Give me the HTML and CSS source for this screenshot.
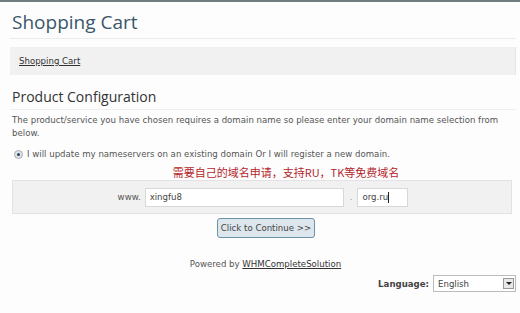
FILE: index.html
```html
<html>
<head>
<link rel="stylesheet" href="styles.css">
</head>
<body>
<div class="wrapper">
  <h1 class="page-title">Shopping Cart</h1>

  <div class="breadcrumb">
    <a href="#">Shopping Cart</a>
  </div>

  <h2 class="section-title">Product Configuration</h2>

  <p class="intro">
    The product/service you have chosen requires a domain name so please enter your domain name selection from below.
  </p>

  <div class="option">
    <span class="radio"><span class="dot"></span></span>
    I will update my nameservers on an existing domain Or I will register a new domain.
  </div>

  <div class="note">需要自己的域名申请，支持RU，TK等免费域名</div>

  <div class="domain-box">
    <span class="www">www.</span>
    <span class="input sld">xingfu8</span>
    <span class="dot-sep">.</span>
    <span class="input tld">org.ru<span class="caret"></span></span>
  </div>

  <div class="actions">
    <span class="btn">Click to Continue &gt;&gt;</span>
  </div>

  <div class="powered">
    Powered by <a href="#">WHMCompleteSolution</a>
  </div>

  <div class="language">
    <span class="lang-label">Language:</span>
    <span class="select">English<span class="arrow"></span></span>
  </div>
</div>
</body>
</html>
```

FILE: styles.css
```css
body {
  margin: 0;
  background: #fdfdfd;
  border-top: 2px solid #6f7d80;
  font-family: "DejaVu Sans", Verdana, sans-serif;
  font-size: 8.6px;
  color: #555;
}
.wrapper {
  padding: 0 4px 0 10px;
}
.page-title {
  margin: 0;
  padding: 8px 0 4px 2px;
  font-family: "Open Sans", sans-serif;
  font-weight: normal;
  font-size: 19px;
  color: #3b566a;
  border-bottom: 1px solid #ececec;
  line-height: 24px;
}
.breadcrumb {
  margin-top: 8px;
  background: #f1f1f1;
  height: 28px;
  line-height: 28px;
  padding-left: 9px;
  border-right: 1px solid #e4e4e4;
}
.breadcrumb a {
  color: #333;
}
.section-title {
  margin: 13px 0 0 0;
  padding: 0 0 3px 2px;
  font-family: "Open Sans", sans-serif;
  font-weight: normal;
  font-size: 14px;
  color: #333;
  line-height: 18px;
  border-bottom: 1px solid #efefef;
}
.intro {
  margin: 4px 0 0 2px;
  line-height: 13px;
  color: #555;
}
.option {
  margin: 9px 0 0 2px;
  display: flex;
  align-items: center;
  gap: 4px;
  padding-left: 2px;
  line-height: 11px;
}
.radio {
  width: 7px;
  height: 7px;
  border-radius: 50%;
  border: 1px solid #aab;
  background: #dfe6ea;
  display: flex;
  align-items: center;
  justify-content: center;
}
.radio .dot {
  width: 3px;
  height: 3px;
  border-radius: 50%;
  background: #2b4150;
}
.note {
  margin-top: 5px;
  text-align: center;
  padding-left: 46px;
  font-family: "Noto Sans CJK SC", sans-serif;
  font-size: 11px;
  line-height: 14px;
  color: #b3262a;
}
.domain-box {
  margin: 1px 4px 0 2px;
  background: #f1f1f1;
  border: 1px solid #e2e2e2;
  height: 32px;
  display: flex;
  align-items: center;
  justify-content: center;
  padding-left: 2px;
}
.www {
  color: #555;
  margin-right: 4px;
}
.input {
  background: #fff;
  border: 1px solid #d8d8d8;
  height: 19px;
  padding-left: 4px;
  color: #444;
  box-sizing: border-box;
  display: flex;
  align-items: center;
}
.sld {
  width: 199px;
}
.tld {
  width: 51px;
}
.caret {
  width: 1px;
  height: 11px;
  background: #222;
}
.dot-sep {
  color: #999;
  margin: 0 5px 0 6px;
}
.actions {
  display: flex;
  justify-content: center;
  margin-top: 4px;
  padding-left: 6px;
}
.btn {
  border: 1px solid #6c94a8;
  border-radius: 3px;
  background: #dce6ec;
  color: #444;
  padding: 3px 3px;
  line-height: 12px;
}
.powered {
  margin-top: 21px;
  text-align: center;
  padding-left: 5px;
  line-height: 11px;
  color: #555;
}
.powered a {
  color: #333;
}
.language {
  margin-top: 5px;
  display: flex;
  justify-content: flex-end;
  align-items: center;
  gap: 4px;
}
.lang-label {
  font-weight: bold;
  color: #444;
}
.select {
  width: 83px;
  height: 17px;
  box-sizing: border-box;
  border: 1px solid #bbb;
  background: #fff;
  padding-left: 4px;
  display: flex;
  align-items: center;
  justify-content: space-between;
  color: #444;
}
.arrow {
  width: 11px;
  height: 11px;
  margin-right: 1px;
  border: 1px solid #999;
  box-sizing: border-box;
  background: #e8e8e8;
  position: relative;
}
.arrow::after {
  content: "";
  position: absolute;
  left: 2px;
  top: 3px;
  border-left: 3px solid transparent;
  border-right: 3px solid transparent;
  border-top: 3px solid #222;
}
```
